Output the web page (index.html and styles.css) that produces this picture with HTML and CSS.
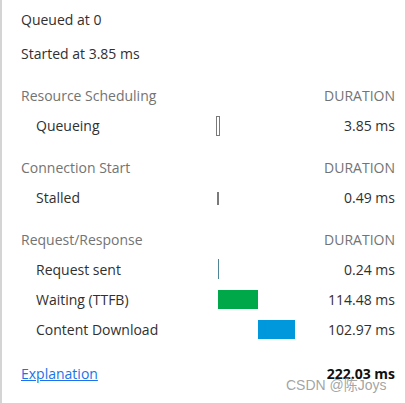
FILE: index.html
```html
<!DOCTYPE html>
<html>
<head>
<meta charset="utf-8">
<link rel="stylesheet" href="styles.css">
</head>
<body>
<div class="panel">
  <div class="info">Queued at 0</div>
  <div class="info">Started at 3.85 ms</div>

  <div class="section">
    <div class="row head"><span class="name">Resource Scheduling</span><span class="val">DURATION</span></div>
    <div class="row item"><span class="name">Queueing</span><span class="track"><span class="bar queue" style="left:0%"></span></span><span class="val">3.85 ms</span></div>
  </div>

  <div class="section">
    <div class="row head"><span class="name">Connection Start</span><span class="val">DURATION</span></div>
    <div class="row item"><span class="name">Stalled</span><span class="track"><span class="bar stall" style="left:1.3%"></span></span><span class="val">0.49 ms</span></div>
  </div>

  <div class="section">
    <div class="row head"><span class="name">Request/Response</span><span class="val">DURATION</span></div>
    <div class="row item"><span class="name">Request sent</span><span class="track"><span class="bar sent" style="left:2%"></span></span><span class="val">0.24 ms</span></div>
    <div class="row item"><span class="name">Waiting (TTFB)</span><span class="track"><span class="bar wait" style="left:2.3%;width:50.7%"></span></span><span class="val">114.48 ms</span></div>
    <div class="row item"><span class="name">Content Download</span><span class="track"><span class="bar dl" style="left:53%;width:46.3%"></span></span><span class="val">102.97 ms</span></div>
  </div>

  <div class="row total"><a class="link" href="#">Explanation</a><span class="val strong">222.03 ms</span></div>
  <div class="mark">CSDN @陈Joys</div>
</div>
</body>
</html>
```

FILE: styles.css
```css
html, body {
  margin: 0;
  padding: 0;
  background: #fff;
}
body {
  font-family: "Open Sans", "Noto Sans", "Noto Sans CJK SC", sans-serif;
  font-size: 14px;
  color: #303030;
}
.panel {
  position: relative;
  height: 403px;
  box-sizing: border-box;
  border-left: 2px solid #d4d4d4;
  padding: 3px 10px 0 19px;
}
.info {
  height: 34px;
  line-height: 34px;
}
.section {
  margin-top: 9px;
}
.section + .section {
  margin-top: 12px;
}
.row {
  display: flex;
  align-items: center;
  height: 30px;
}
.head {
  color: #737373;
}
.head .name {
  flex: 1;
}
.item .name {
  width: 195px;
  padding-left: 15px;
  box-sizing: border-box;
  flex: none;
}
.track {
  position: relative;
  width: 80px;
  height: 30px;
  flex: none;
}
.val {
  margin-left: auto;
  text-align: right;
}
.bar {
  position: absolute;
  box-sizing: border-box;
}
.queue {
  border: 1px solid #7a7a7a;
  width: 4px;
  top: 6px;
  height: 20px;
}
.stall {
  width: 2px;
  top: 10px;
  height: 13px;
  background: #7a7a7a;
}
.sent {
  width: 1px;
  top: 5px;
  height: 20px;
  background: #4e8597;
}
.wait {
  background: #00a849;
  height: 19px;
  top: 6px;
}
.dl {
  background: #0098dc;
  height: 19px;
  top: 6px;
}
.total {
  margin-top: 14px;
}
.link {
  color: #1a73e8;
  text-decoration: underline;
}
.strong {
  font-weight: 700;
  color: #111;
}
.mark {
  position: absolute;
  left: 284px;
  top: 374px;
  font-family: "Liberation Sans", "Noto Sans CJK SC", sans-serif;
  font-size: 14px;
  color: rgba(140, 140, 140, 0.8);
  white-space: nowrap;
}
```
